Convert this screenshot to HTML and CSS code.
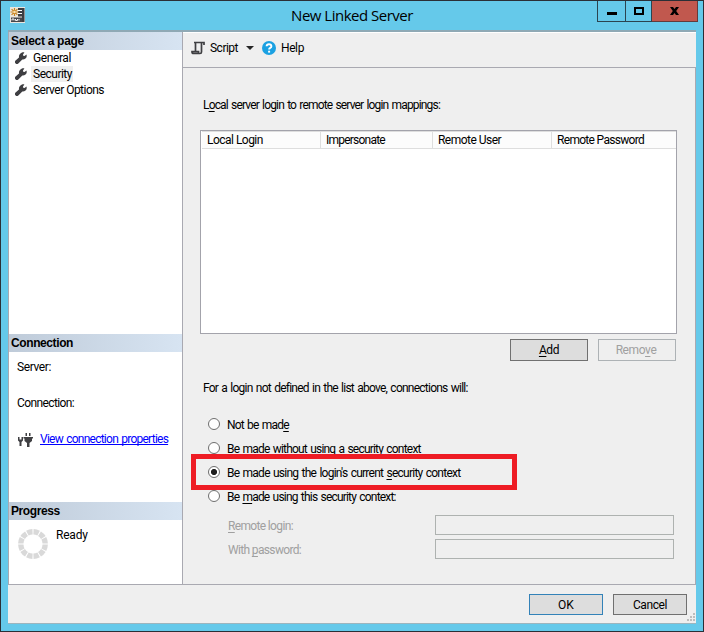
FILE: index.html
```html
<!DOCTYPE html>
<html lang="en">
<head>
<meta charset="utf-8">
<title>New Linked Server</title>
<link rel="stylesheet" href="styles.css">
</head>
<body>
<svg width="0" height="0" class="defs">
  <symbol id="wrench" viewBox="0 0 12 12"><path d="M.5 11.300a1.800 1.800 0 0 1 .1-2.700L4 5.600C3.600 3.300 4.900 1.200 7 .5 7.900.2 8.700.2 9.400.5L8 2.600l.2 1.200 1.300.2L11.500 2.600c.5 1.500.1 3-1 3.900-1 .9-2.200 1.200-3.200 1L3.300 11.400a1.800 1.800 0 0 1-2.800-.1z" fill="#3f3f42"/></symbol>
</svg>
<div class="window">
  <header class="titlebar">
    <svg class="appicon" width="15" height="16" viewBox="0 0 15 16">
      <rect width="15" height="16" fill="#e9e6df"/>
      <path d="M8 1h6.500v14H12V9.500H8z" fill="#3c3d42"/>
      <path d="M1 10.500h11v4.500H1z" fill="#46474b"/>
      <path d="M2 13.500v-1.500h2v1.500M5.500 12v1.500h2V12M9 13.500v-1.500" stroke="#f4f4f4" fill="none"/>
      <path d="M8 3.500h4M8 6.500h4" stroke="#fff"/>
      <path d="M4.500 1v8M.5 5h8M1.600 2.100l5.800 5.800M7.400 2.100L1.600 7.900" stroke="#c9821c" stroke-width="1.200"/>
      <circle cx="4.500" cy="5" r="1.300" fill="#f7e3b4"/>
    </svg>
    <h1>New Linked Server</h1>
    <div class="controls">
      <span class="min"><svg width="10" height="3"><path d="M0 0h10v3H0z"/></svg></span>
      <span class="max"><svg width="10" height="8"><path d="M1 1h8v6H1z" fill="none" stroke="#000" stroke-width="2"/></svg></span>
      <span class="close"><svg width="9" height="8" viewBox="0 0 9 8"><path d="M0 0h3l1.500 2L6 0h3L6.200 4 9 8H6L4.500 6 3 8H0l2.800-4z"/></svg></span>
    </div>
  </header>
  <div class="client">
    <div class="columns">
      <aside>
        <section class="pages">
          <h2>Select a page</h2>
          <div class="page"><svg width="12" height="12"><use href="#wrench"/></svg><span class="general">General</span></div>
          <div class="page"><svg width="12" height="12"><use href="#wrench"/></svg><span class="selected">Security</span></div>
          <div class="page"><svg width="12" height="12"><use href="#wrench"/></svg><span class="options">Server Options</span></div>
        </section>
        <section class="connection">
          <h2>Connection</h2>
          <p class="server">Server:</p>
          <p class="conn">Connection:</p>
          <div class="props">
            <svg width="15" height="14" viewBox="0 0 15 14"><path d="M0 4h1.500v2.500h2V4H5v3.500L3.500 9v4h-2V9L0 7.500zM7.500 0H9v3H7.500zM11 0h1.500v3H11zM5.500 4H15v1.500h-1V8l-2.500 2v4h-2.500v-4L6.500 8V5.500h-1z" fill="#3f3f42"/></svg>
            <a>View connection properties</a>
          </div>
        </section>
        <section class="progress">
          <h2>Progress</h2>
          <div class="status">
            <svg width="30" height="30" viewBox="0 0 30 30"><circle cx="15" cy="15" r="12.200" fill="none" stroke="#d9d9d9" stroke-width="5.400" pathLength="120" stroke-dasharray="8.400 1.600" stroke-dashoffset="-.8"/></svg>
            <span>Ready</span>
          </div>
        </section>
      </aside>
      <main>
        <div class="toolbar">
          <svg class="script-icon" width="14" height="14" viewBox="0 0 14 14"><path d="M13 4V1.500H4.500V10.500M3 1.500h7.500v9.500q0 1.500-1.500 1.500H2.500Q1 12.500 1 10.700H7.500v1.500" fill="none" stroke="#3f3f42" stroke-width="1.700"/></svg>
          <span class="script">Script</span>
          <svg class="arrow" width="8" height="4" viewBox="0 0 8 4"><path d="M0 0h8L4 4z" fill="#262626"/></svg>
          <svg class="help-icon" width="14" height="14" viewBox="0 0 14 14"><circle cx="7" cy="7" r="7" fill="#1ba1e2"/><path d="M4.600 5.300Q4.700 3.200 7 3.200T9.400 5.200Q9.400 6.200 8.200 6.900 7.100 7.500 7.100 8.600" fill="none" stroke="#fff" stroke-width="1.900"/><path d="M6.100 9.700H8.100v1.900H6.100z" fill="#fff"/></svg>
          <span class="help">Help</span>
        </div>
        <div class="content">
          <p class="mapping-label">L<u>o</u>cal server login to remote server login mappings:</p>
          <div class="grid">
            <div class="grid-head"><span>Local Login</span><span class="imp">Impersonate</span><span>Remote User</span><span class="pwd">Remote Password</span></div>
          </div>
          <div class="grid-actions"><button class="add"><u>A</u>dd</button><button class="remove" disabled>Remo<u>v</u>e</button></div>
          <p class="context-label">For a login not defined in the list above, connections will:</p>
          <div class="choices">
            <div class="choice"><i></i><span class="none">Not be mad<u>e</u></span></div>
            <div class="choice"><i></i><span class="without">Be made without using a security context</span></div>
            <div class="choice current"><i class="on"></i><span>Be made using the login's current <u>s</u>ecurity context</span><b class="highlight"></b></div>
            <div class="choice"><i></i><span class="this">Be <u>m</u>ade using this security context:</span></div>
          </div>
          <div class="field"><label><u>R</u>emote login:</label><div class="input"></div></div>
          <div class="field"><label>With <u>p</u>assword:</label><div class="input"></div></div>
        </div>
      </main>
    </div>
    <footer>
      <button class="ok">OK</button><button class="cancel">Cancel</button>
      <svg class="grip" width="9" height="9"><path d="M7 1h2M4 4h2M7 4h2M1 7h2M4 7h2M7 7h2" stroke="#bdbdbd" stroke-width="2"/></svg>
    </footer>
  </div>
</div>
</body>
</html>
```
FILE: styles.css
```css
* { box-sizing: border-box; }
body { margin: 0; font: 12px/16px Roboto, "Liberation Sans", sans-serif; letter-spacing: -.6px; color: #000; white-space: nowrap; }
h1, h2, p { margin: 0; }
svg { display: block; flex: none; }
u { text-decoration: underline; text-underline-offset: 2px; text-decoration-thickness: 1px; text-decoration-skip-ink: none; }
button { font: inherit; letter-spacing: inherit; padding: 0; height: 22px; border: 1px solid #707070; border-radius: 0; background: #ddd; color: #000; }
.defs { position: absolute; }

.window { width: 704px; height: 632px; border: 1px solid #2b2f36; background: #65c9ea; padding: 0 7px 7px; display: flex; flex-direction: column; }
.titlebar { height: 29px; flex: none; display: grid; grid-template-columns: 100px 1fr 100px; }
.appicon { margin: 6px 0 0 2px; }
h1 { font: 15px/29px "Open Sans", "Noto Sans", sans-serif; letter-spacing: -.5px; text-align: center; }
.controls { margin-right: -2px; display: flex; justify-content: flex-end; height: 21px; }
.controls span { border: 1px solid #2b4450; border-top: 0; border-left-width: 0; display: flex; justify-content: center; }
.controls .min { width: 29px; border-left-width: 1px; padding-top: 11px; }
.controls .max { width: 26px; padding-top: 6px; }
.controls .close { width: 46px; background: #c1584e; border-color: #643b3b; padding-top: 6px; }

.client { flex: 1; background: #efefef; border-top: 2px solid #8fa9b5; border-bottom: 1px solid #9cb5be; display: flex; flex-direction: column; }
.columns { height: 553px; flex: none; display: flex; border-bottom: 1px solid #a9a9b1; }
aside { width: 175px; flex: none; background: #fff; border-left: 1px solid #a9a9b1; border-right: 1px solid #a9a9b1; display: flex; flex-direction: column; }
h2 { height: 18px; padding-left: 2px; background: linear-gradient(90deg, #bfcbd9, #d7e4f2); font: bold 12px/18px "Liberation Sans", sans-serif; letter-spacing: -.4px; }
.pages { height: 302px; }
.pages h2 { letter-spacing: -.29px; }
.page { height: 16px; display: flex; align-items: center; padding-left: 6px; }
.page svg { margin-top: -1px; }
.page span { margin-left: 4px; padding: 0 1px 0 2px; }
.general { letter-spacing: -.4px; }
.page .selected { background: #efefef; letter-spacing: -.5px; }
.options { letter-spacing: -.52px; }
.connection { height: 168px; }
.server { padding: 7px 0 0 8px; letter-spacing: -.39px; }
.conn { padding: 20px 0 0 8px; }
.props { display: flex; padding: 20px 0 0 9px; }
.props svg { margin-top: 2px; }
.props a { margin-left: 7px; color: #00f; text-decoration: underline; text-underline-offset: 1px; text-decoration-skip-ink: none; letter-spacing: -.75px; word-spacing: 1px; }
.status { display: flex; padding: 7px 0 0 9px; }
.status svg { margin-top: 2px; }
.status span { margin-left: 8px; letter-spacing: -.2px; }

main { flex: 1; display: flex; flex-direction: column; }
.toolbar { height: 36px; border-top: 1px solid #fff; border-bottom: 1px solid #a9a9b1; display: flex; align-items: center; padding: 0 0 5px 8px; }
.script { margin-left: 5px; width: 31px; letter-spacing: -.51px; }
.arrow { margin-left: 5px; }
.help-icon { margin-left: 8px; }
.help { margin-left: 5px; letter-spacing: -.4px; }
.content { flex: 1; border-right: 1px solid #a9a9b1; padding: 29px 18px 0 17px; }
.mapping-label { padding-left: 3px; letter-spacing: -.83px; word-spacing: 1px; }
.grid { margin-top: 17px; height: 204px; background: #fff; border: 1px solid #a3a3ab; padding: 0 0 0 1px; }
.grid-head { height: 18px; background: #fcfcfc; border-top: 1px solid #dedede; border-bottom: 1px solid #dedede; display: grid; grid-template-columns: 119px 112px 119px 1fr; }
.grid-head span { padding-left: 5px; border-right: 1px solid #dedede; line-height: 16px; letter-spacing: -.52px; }
.grid-head span:last-child { border-right: 0; }
.grid-head .imp { letter-spacing: -.77px; }
.grid-head .pwd { letter-spacing: -.69px; }
.grid-actions { margin-top: 5px; display: flex; justify-content: flex-end; gap: 10px; letter-spacing: -.4px; }
.grid-actions button { width: 78px; }
.grid-actions .remove { background: #efefef; border-color: #adb2b5; color: #a0a0a0; margin-right: 1px; padding-right: 2px; }
.context-label { margin-top: 19px; padding-left: 3px; letter-spacing: -.76px; word-spacing: 1px; }
.choices { margin-top: 17px; }
.choice { height: 24px; padding-left: 8px; display: flex; align-items: center; position: relative; }
.choice i { width: 12px; height: 12px; border: 1px solid #6e6e6e; border-radius: 50%; background: #fff; margin-top: -2px; }
.choice .on { background: radial-gradient(circle, #1d1d1d 2.700px, #fff 3.400px); }
.choice span { margin-left: 7px; letter-spacing: -.75px; word-spacing: 1px; }
.choice .none { letter-spacing: -.8px; }
.choice .without { letter-spacing: -.79px; }
.choice .this { letter-spacing: -.8px; }
.highlight { position: absolute; z-index: 1; left: -9px; top: -7px; width: 326px; height: 36px; border: 5px solid #ee1c24; }
.field { height: 20px; margin: 6px 0 4px; display: flex; color: #a0a0a0; letter-spacing: -.65px; padding-left: 28px; }
.field + .field { margin-top: 4px; }
.field label { width: 207px; line-height: 23px; }
.input { width: 239px; border: 1px solid #aeb2b0; }

footer { flex: 1; display: flex; justify-content: flex-end; padding: 9px 9px 0 0; position: relative; }
footer button { width: 74px; height: 21px; margin-left: 10px; }
.ok { border-color: #3382b8; letter-spacing: 0; }
.cancel { letter-spacing: -.42px; }
.grip { position: absolute; right: 1px; bottom: 1px; }
```
